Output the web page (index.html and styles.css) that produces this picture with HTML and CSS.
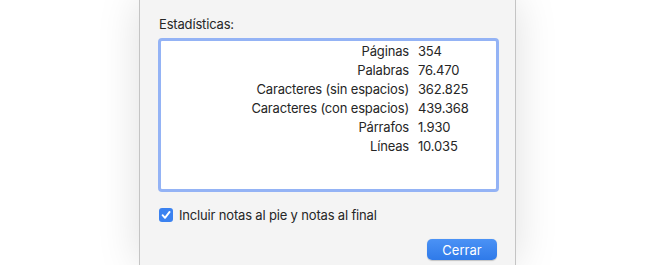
FILE: index.html
```html
<!DOCTYPE html>
<html lang="es">
<head>
  <meta charset="UTF-8">
  <title>Estadísticas</title>
  <link rel="stylesheet" href="styles.css">
</head>
<body>
  <div class="sheet">
    <div class="sheet-label">Estadísticas:</div>

    <div class="stats-box">
      <div class="stats">
        <span class="stat-name">Páginas</span><span class="stat-value">354</span>
        <span class="stat-name">Palabras</span><span class="stat-value">76.470</span>
        <span class="stat-name">Caracteres (sin espacios)</span><span class="stat-value">362.825</span>
        <span class="stat-name">Caracteres (con espacios)</span><span class="stat-value">439.368</span>
        <span class="stat-name">Párrafos</span><span class="stat-value">1.930</span>
        <span class="stat-name">Líneas</span><span class="stat-value">10.035</span>
      </div>
    </div>

    <label class="check">
      <span class="check-box">
        <svg width="14" height="14" viewBox="0 0 14 14">
          <path d="M3.6 7.2 L6 9.8 L10.6 3.9" fill="none" stroke="#fff" stroke-width="1.9" stroke-linecap="round" stroke-linejoin="round"/>
        </svg>
      </span>
      Incluir notas al pie y notas al final
    </label>

    <div class="actions">
      <button class="btn">Cerrar</button>
    </div>
  </div>
</body>
</html>
```

FILE: styles.css
```css
/* Hoja de estadisticas */
body {
  margin: 0;
  background-color: #fff;
  font-family: 'Inter', 'Roboto', sans-serif;
  font-size: 13px;
  letter-spacing: -0.17px;
  color: #262626;
  overflow: hidden;
}
.sheet {
  box-sizing: border-box;
  width: 377px;
  height: 265px;
  margin-left: 139px;
  padding: 16px 17px 0 17px;
  background-color: #f4f4f4;
  border-left: 1px solid #c4c4c4;
  border-right: 1px solid #c4c4c4;
  box-shadow: 0 0 40px rgba(0,0,0,0.13);
}
.sheet-label {
  line-height: 16px;
  padding-left: 2px;
  margin-bottom: 6px;
}
.stats-box {
  box-sizing: border-box;
  width: 341px;
  height: 154px;
  margin-left: 1px;
  background-color: #fff;
  border: 3px solid #94b3f5;
  border-radius: 4px;
  padding-top: 1px;
}
.stats {
  display: grid;
  grid-template-columns: 248px auto;
  column-gap: 9px;
  line-height: 19px;
}
.stat-name {
  text-align: right;
}
.check {
  display: flex;
  align-items: center;
  gap: 6px;
  margin-top: 15px;
  margin-left: 2px;
  line-height: 16px;
}
.check-box {
  display: flex;
  width: 14px;
  height: 14px;
  border-radius: 3px;
  background-color: #3b82f0;
}
.actions {
  display: flex;
  justify-content: flex-end;
  margin-top: 16px;
  padding-right: 1px;
}
.btn {
  width: 70px;
  height: 21px;
  padding: 0;
  border: none;
  border-radius: 5px;
  background: linear-gradient(#4b92f5, #2f7ae9);
  color: #fff;
  font-family: inherit;
  font-size: 13px;
  letter-spacing: 0;
  box-shadow: 0 0.5px 1px rgba(0,0,0,0.2);
}
```
